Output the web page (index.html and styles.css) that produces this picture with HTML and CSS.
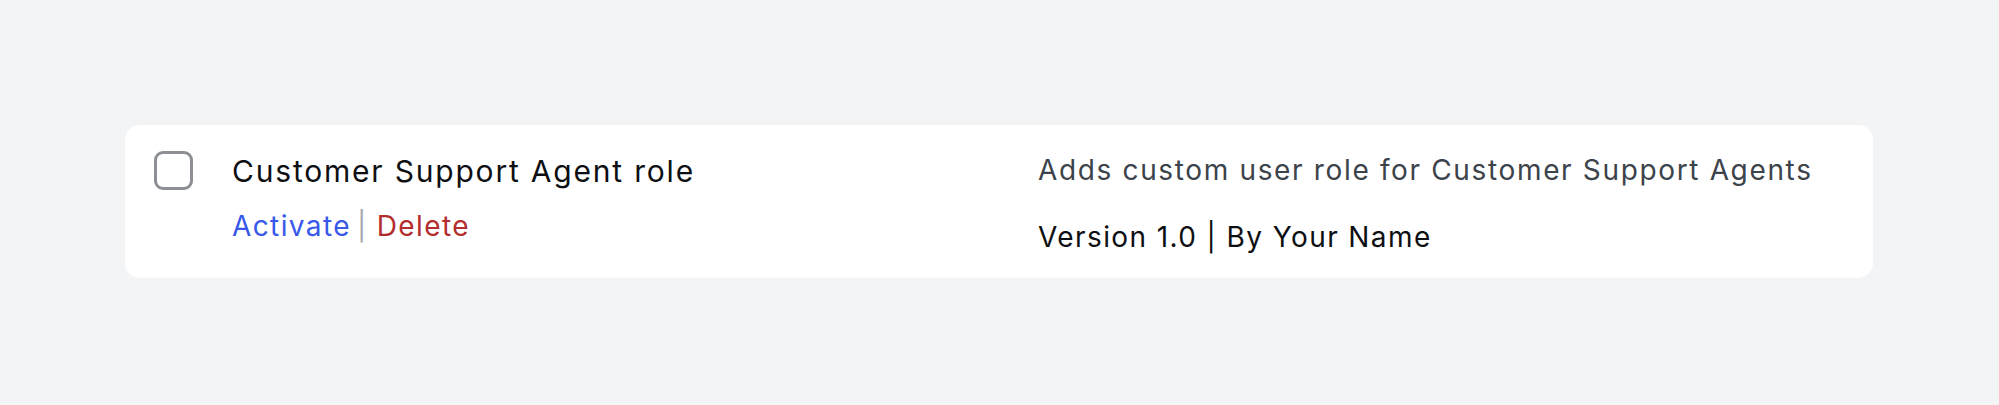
FILE: index.html
```html
<!DOCTYPE html>
<html lang="en">
<head>
    <meta charset="UTF-8">
    <meta name="viewport" content="width=device-width, initial-scale=1.0">
    <title>Plugins</title>
    <link rel="stylesheet" href="styles.css">
</head>
<body>
    <div class="page">
        <div class="plugin-row">
            <div class="check-col">
                <input type="checkbox" class="plugin-check" aria-label="Select Customer Support Agent role">
            </div>
            <div class="plugin-title">
                <strong>Customer Support Agent role</strong>
                <div class="row-actions">
                    <a href="#" class="activate">Activate</a><span class="sep">|</span><a href="#" class="delete">Delete</a>
                </div>
            </div>
            <div class="plugin-desc">
                <p class="desc-text">Adds custom user role for Customer Support Agents</p>
                <p class="plugin-meta">Version 1.0 | By Your Name</p>
            </div>
        </div>
    </div>
</body>
</html>
```

FILE: styles.css
```css
:root {
    --bg-color: #f3f4f6;
    --card-bg: #ffffff;
    --text-color: #0d0f12;
    --muted-text: #3c434a;
    --link-color: #3858e9;
    --delete-color: #b32d2e;
    --sep-color: #a7aaad;
    --check-border: #8c8f94;
}

* {
    box-sizing: border-box;
    margin: 0;
    padding: 0;
}

body {
    font-family: Inter, "Liberation Sans", sans-serif;
    background: var(--bg-color);
    color: var(--text-color);
}

.page {
    padding: 125px 126px 0 125px;
}

.plugin-row {
    background: var(--card-bg);
    border-radius: 15px;
    padding: 27px 29px 23px;
    display: grid;
    grid-template-columns: 78px 1fr 1fr;
}

.plugin-check {
    appearance: none;
    -webkit-appearance: none;
    display: block;
    width: 39px;
    height: 39px;
    border: 3px solid var(--check-border);
    border-radius: 9px;
    background: #fff;
    margin-top: -1px;
}

.plugin-title strong {
    display: block;
    font-size: 30px;
    font-weight: 400;
    line-height: 36px;
    letter-spacing: 1.8px;
    margin-top: 1px;
}

.row-actions {
    font-size: 28px;
    line-height: 36px;
    letter-spacing: 1.4px;
    margin-top: 19px;
}

.row-actions a {
    text-decoration: none;
}

.activate {
    color: var(--link-color);
}

.delete {
    color: var(--delete-color);
}

.sep {
    color: var(--sep-color);
    margin: 0 9px 0 6px;
}

.desc-text {
    font-size: 28px;
    line-height: 36px;
    letter-spacing: 1.65px;
    color: var(--muted-text);
}

.plugin-meta {
    font-size: 28px;
    line-height: 36px;
    letter-spacing: 1.4px;
    margin-top: 31px;
}
```
